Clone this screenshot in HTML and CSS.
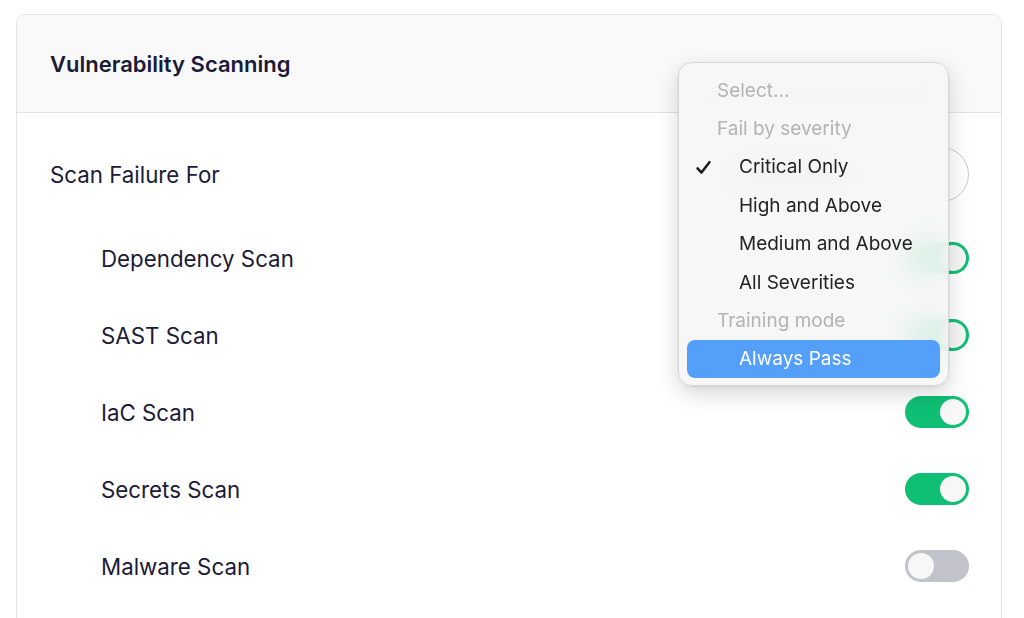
FILE: index.html
```html
<!DOCTYPE html>
<html>
<head>
<meta charset="utf-8">
<link rel="stylesheet" href="styles.css">
</head>
<body>
<div class="card">
  <div class="card-header">
    <h2 class="card-title">Vulnerability Scanning</h2>
  </div>
  <div class="card-body">
    <div class="row row-main">
      <span class="label">Scan Failure For</span>
      <div class="select"><span class="select-blur"></span></div>
    </div>
    <div class="row row-sub">
      <span class="label">Dependency Scan</span>
      <span class="toggle on"><span class="knob"></span></span>
    </div>
    <div class="row row-sub">
      <span class="label">SAST Scan</span>
      <span class="toggle on"><span class="knob"></span></span>
    </div>
    <div class="row row-sub">
      <span class="label">IaC Scan</span>
      <span class="toggle on"><span class="knob"></span></span>
    </div>
    <div class="row row-sub">
      <span class="label">Secrets Scan</span>
      <span class="toggle on"><span class="knob"></span></span>
    </div>
    <div class="row row-sub">
      <span class="label">Malware Scan</span>
      <span class="toggle"><span class="knob"></span></span>
    </div>
  </div>
</div>

<div class="menu">
  <div class="menu-item group">Select...</div>
  <div class="menu-item group">Fail by severity</div>
  <div class="menu-item option checked">
    <svg class="check" viewBox="0 0 16 16" width="17" height="17"><path d="M2.4 8.8 L6.1 12.8 L13.6 3.0" fill="none" stroke="#1d1d1f" stroke-width="2.4" stroke-linecap="round" stroke-linejoin="round"/></svg>
    Critical Only
  </div>
  <div class="menu-item option">High and Above</div>
  <div class="menu-item option">Medium and Above</div>
  <div class="menu-item option">All Severities</div>
  <div class="menu-item group">Training mode</div>
  <div class="menu-item option active">Always Pass</div>
</div>
</body>
</html>
```

FILE: styles.css
```css
* { box-sizing: border-box; }
html, body {
  margin: 0;
  padding: 0;
  background: #ffffff;
  font-family: Inter, "Noto Sans", "Liberation Sans", sans-serif;
  color: #1b1a38;
}
body {
  padding: 14px 22px 0 16px;
  height: 618px;
  overflow: hidden;
  position: relative;
}
.card {
  border: 1px solid #e4e4e7;
  border-radius: 9px;
  height: 620px;
  background: #fff;
}
.card-header {
  height: 98px;
  background: #f9f9f9;
  border-bottom: 1px solid #e2e2e4;
  border-radius: 9px 9px 0 0;
  display: flex;
  align-items: center;
  padding-left: 33px;
}
.card-title {
  margin: 0;
  font-size: 22px;
  font-weight: 600;
  color: #1b1a38;
}
.card-body {
  padding: 34px 32px 0 33px;
  display: flex;
  flex-direction: column;
}
.row {
  display: flex;
  align-items: center;
  justify-content: space-between;
}
.label {
  font-size: 22.3px;
  color: #1b1a38;
}
.row-main { height: 55px; }
.row-sub {
  height: 32px;
  padding-left: 51px;
  margin-top: 45px;
}
.row-main + .row-sub { margin-top: 40px; }
.select {
  width: 270px;
  height: 55px;
  border: 1px solid #c9c9cc;
  border-radius: 28px;
  display: flex;
  align-items: center;
  padding-left: 30px;
}
.select-blur {
  width: 120px;
  height: 14px;
  border-radius: 7px;
  background: #c8c8c8;
}
.toggle {
  width: 64px;
  height: 32px;
  border-radius: 16px;
  background: #c2c2cb;
  display: flex;
  align-items: center;
  padding: 0 3px;
}
.toggle.on {
  background: #0fbf74;
  justify-content: flex-end;
}
.knob {
  width: 26px;
  height: 26px;
  border-radius: 50%;
  background: #f7f7f8;
}
.menu {
  position: absolute;
  left: 678px;
  top: 62px;
  width: 271px;
  height: 324px;
  padding: 8px 8px 7px;
  border-radius: 14px;
  background: rgba(246, 246, 246, 0.86);
  backdrop-filter: blur(14px);
  -webkit-backdrop-filter: blur(14px);
  border: 1px solid #d6d6d6;
  box-shadow: 0 8px 22px rgba(0, 0, 0, 0.16), 0 1px 3px rgba(0, 0, 0, 0.08);
  font-family: Inter, "Noto Sans", "Liberation Sans", sans-serif;
}
.menu-item {
  height: 38.4px;
  display: flex;
  align-items: center;
  font-size: 19px;
  border-radius: 8px;
  position: relative;
}
.menu-item.group {
  padding-left: 30px;
  color: #b3b3b3;
}
.menu-item.option {
  padding-left: 52px;
  color: #232323;
}
.menu-item.active {
  background: #549ffa;
  color: #ffffff;
}
.check {
  position: absolute;
  left: 8px;
  top: 11px;
}
```
